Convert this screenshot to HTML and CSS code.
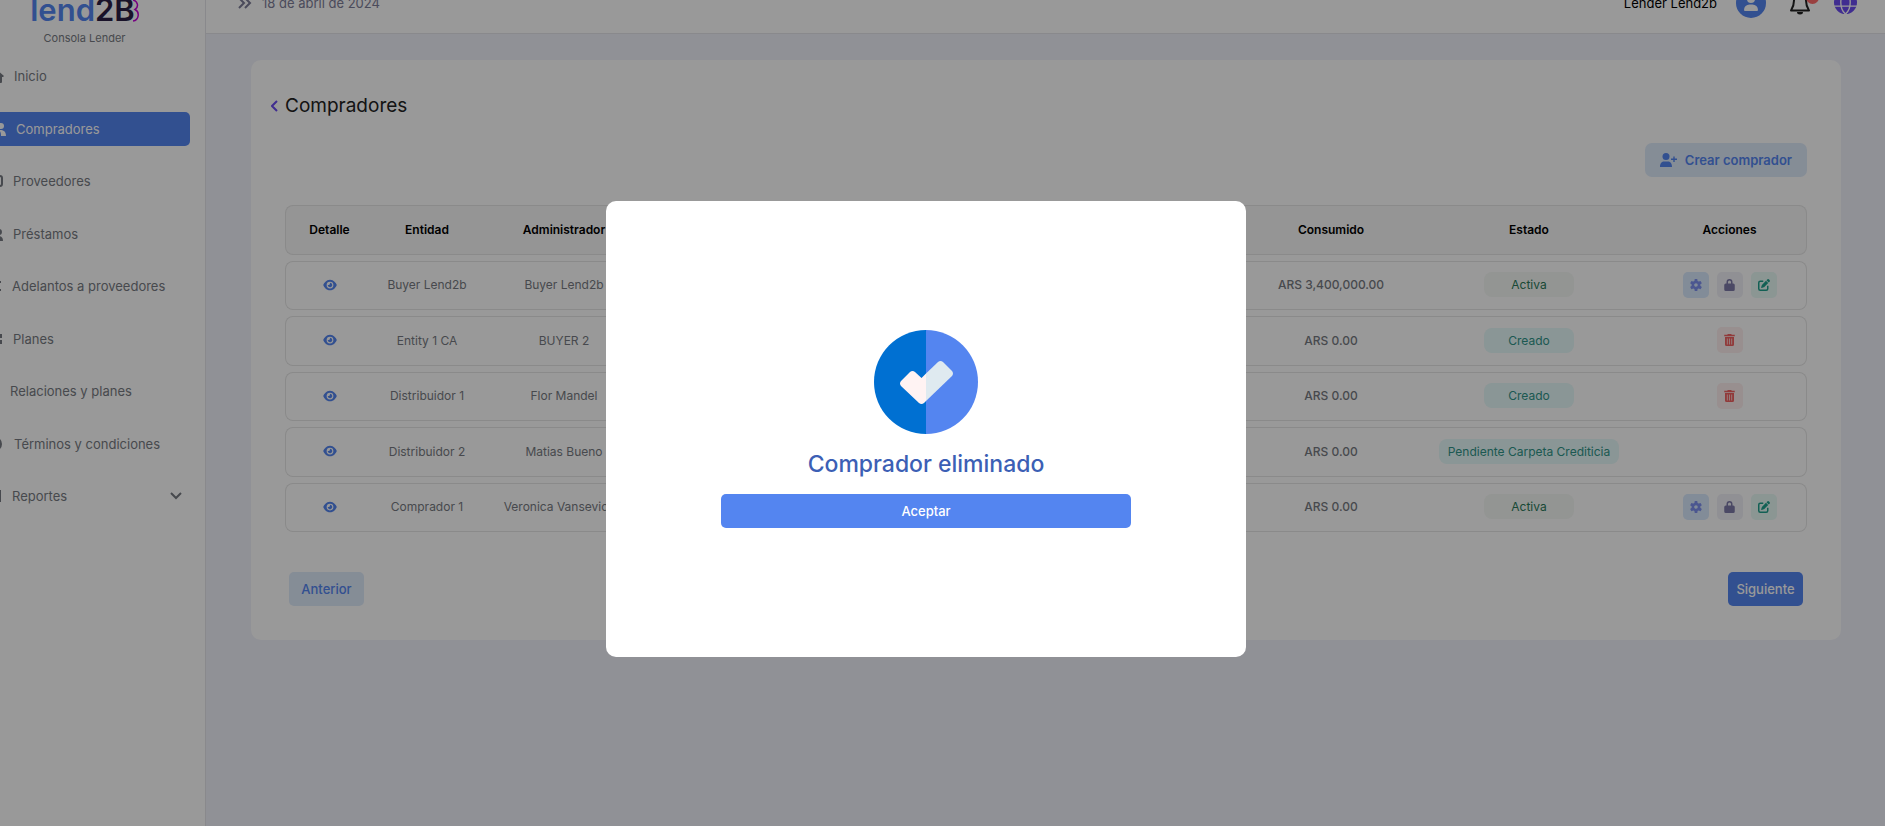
FILE: index.html
```html
<!DOCTYPE html>
<html lang="es">
<head>
    <meta charset="UTF-8">
    <meta name="viewport" content="width=device-width, initial-scale=1.0">
    <title>Compradores</title>
    <link rel="stylesheet" href="styles.css">
</head>
<body>
    <!-- shared icons -->
    <svg class="sprite" aria-hidden="true">
        <symbol id="i-eye" viewBox="0 0 576 512"><path fill-rule="evenodd" d="M288 32c-81 0-146 37-193 80C48 156 17 208 3 244c-4 8-4 17 0 25 14 35 45 87 92 131 47 43 112 80 193 80s146-37 193-80c47-44 78-96 92-131 4-8 4-17 0-25-14-36-45-88-92-132-47-43-112-80-193-80zM144 256a144 144 0 1 1 288 0 144 144 0 1 1-288 0zm144-64c0 35-29 64-64 64-7 0-14-1-20-3-6-2-12 1-12 7 0 7 1 14 3 21 14 51 67 82 118 68s82-67 68-118c-11-41-48-69-89-71-6 0-9 6-7 12 2 6 3 13 3 20z"/></symbol>
        <symbol id="i-gear" viewBox="0 0 16 16"><path fill="none" stroke="currentColor" stroke-width="3.400" d="M8 3.900a4.100 4.100 0 1 0 0 8.200 4.100 4.100 0 0 0 0-8.200z"/><path d="M6.300 0h3.400l.5 3.500H5.800zM6.300 16h3.400l.5-3.500H5.800zM15.800 5.500l-1.700-3-3.300 1.300 2.200 3.800zM.2 10.500l1.700 3 3.300-1.300L3 8.400zM15.800 10.500l-1.700 3-3.300-1.300 2.200-3.800zM.2 5.500l1.700-3 3.300 1.300L3 7.600z"/></symbol>
        <symbol id="i-lock" viewBox="0 0 14 16"><path fill-rule="evenodd" d="M3 6V4a4 4 0 0 1 8 0v2h1a2 2 0 0 1 2 2v6a2 2 0 0 1-2 2H2a2 2 0 0 1-2-2V8a2 2 0 0 1 2-2zm2 0h4V4a2 2 0 0 0-4 0z"/></symbol>
        <symbol id="i-edit" viewBox="0 0 16 16"><path d="M12.300.7a1.700 1.700 0 0 1 2.400 0l.6.6a1.700 1.700 0 0 1 0 2.400l-1 1-3-3zM10.600 2.400l3 3-5.200 5.200c-.2.200-.5.400-.8.500l-2.600.8c-.5.200-1-.300-.8-.8l.8-2.600c.1-.3.300-.6.500-.8zM3 2h4v2H3a1 1 0 0 0-1 1v8a1 1 0 0 0 1 1h8a1 1 0 0 0 1-1V9h2v4a3 3 0 0 1-3 3H3a3 3 0 0 1-3-3V5a3 3 0 0 1 3-3z"/></symbol>
        <symbol id="i-trash" viewBox="0 0 14 16"><path fill-rule="evenodd" d="M4.200.5 4.700 0h4.600l.5.5.2.5h4v2H0V1h4zM1 4h12v10a2 2 0 0 1-2 2H3a2 2 0 0 1-2-2zm2.500 2v8h1V6zm3 0v8h1V6zm3 0v8h1V6z"/></symbol>
        <symbol id="i-user" viewBox="0 0 14 16"><path d="M7 8a4 4 0 1 0 0-8 4 4 0 0 0 0 8zM5.500 9.500h3A5.500 5.500 0 0 1 14 15a1 1 0 0 1-1 1H1a1 1 0 0 1-1-1 5.500 5.500 0 0 1 5.500-5.500z"/></symbol>
    </svg>

    <div class="app">
        <aside class="sidebar">
            <div class="brand">
                <div class="logo">
                    <span class="logo-lend">lend</span><span class="logo-two">2B</span>
                    <svg class="logo-edge" width="6" height="23" viewBox="0 0 6 23"><path d="M0 1c5 1 6 7 2 9.500C7 13 6 21 0 22" fill="none" stroke="#c400d8" stroke-width="1.500"/></svg>
                </div>
                <div class="brand-sub">Consola Lender</div>
            </div>
            <nav class="menu">
                <a href="#"><svg width="16" height="14" viewBox="0 0 16 14"><path d="M8 0l8 7-1 1h-1v5a1 1 0 0 1-1 1h-3V9H6v5H3a1 1 0 0 1-1-1V8H1L0 7z"/></svg>Inicio</a>
                <a href="#" class="active"><svg width="18" height="14" viewBox="0 0 18 14"><circle cx="6" cy="4" r="3"/><circle cx="13" cy="4" r="3"/><path d="M0 14c0-4 2-6 6-6s6 2 6 6zM13 14c0-3-.5-4.500-2-6 4 0 7 1 7 6z"/></svg>Compradores</a>
                <a href="#"><svg width="15" height="12" viewBox="0 0 15 12"><path d="M1 1h11a2 2 0 0 1 2 2v6a2 2 0 0 1-2 2H1" fill="none" stroke="currentColor" stroke-width="2"/><path d="M0 1h12v3H0z"/></svg>Proveedores</a>
                <a href="#"><svg width="15" height="14" viewBox="0 0 15 14"><circle cx="11" cy="5" r="3"/><path d="M0 14c0-4 4-5 10-5 3 0 5 1 5 5z"/></svg>Préstamos</a>
                <a href="#"><svg width="14" height="12" viewBox="0 0 14 12"><path d="M0 1h13v2H0zM0 9h13v2H0z"/></svg>Adelantos a proveedores</a>
                <a href="#"><svg width="15" height="10" viewBox="0 0 15 10"><path d="M0 0h14v4H0zM0 6h14v4H0z"/></svg>Planes</a>
                <a href="#"><svg width="12" height="12" viewBox="0 0 12 12"><path d="M0 0h10v12H0z"/></svg>Relaciones y planes</a>
                <a href="#"><svg width="16" height="14" viewBox="0 0 16 14"><circle cx="7" cy="7" r="7"/></svg>Términos y condiciones</a>
                <a href="#"><svg width="14" height="12" viewBox="0 0 14 12"><path d="M0 0h13v12H0z"/></svg>Reportes<svg class="chevron" width="12" height="8" viewBox="0 0 12 8"><path d="M1 1l5 5 5-5"/></svg></a>
            </nav>
        </aside>

        <div class="main">
            <header class="topbar">
                <svg class="line" width="14" height="12" viewBox="0 0 14 12"><path d="M1 1l5 5-5 5M7 1l5 5-5 5"/></svg>
                <span class="date">18 de abril de 2024</span>
                <span class="user-name">Lender Lend2b</span>
                <a href="#" class="avatar" aria-label="Perfil"><svg width="14" height="16"><use href="#i-user"/></svg></a>
                <a href="#" class="bell" aria-label="Notificaciones">
                    <svg width="20" height="24" viewBox="0 0 20 24"><path d="M1 19.500c2-3 3-5 3-10a6 6 0 0 1 12 0c0 5 1 7 3 10z" fill="none" stroke="#222" stroke-width="2" stroke-linejoin="round"/><path d="M7 21h6a3 2.500 0 0 1-6 0z" fill="#222"/></svg>
                    <span class="dot"></span>
                </a>
                <a href="#" class="globe" aria-label="Idioma"><svg width="23" height="23" viewBox="0 0 22 22"><circle cx="11" cy="11" r="11" fill="#6b4cf0"/><path d="M0 7.500h22M0 14.500h22M11 0c-6 5-6 17 0 22M11 0c6 5 6 17 0 22" fill="none" stroke="#fff" stroke-width="1.300"/></svg></a>
            </header>

            <main class="card">
                <h1><a href="#" aria-label="Volver"><svg class="line back" width="8" height="12" viewBox="0 0 8 12"><path d="M6 1L1 6l5 5"/></svg></a>Compradores</h1>
                <div class="toolbar">
                    <button type="button" class="btn btn-light btn-create">
                        <svg width="17" height="14" viewBox="0 0 17 14"><circle cx="6" cy="3.500" r="3.500"/><path d="M0 14c0-4 2-5.500 4-5.500h4c2 0 4 1.500 4 5.500zM13.300 3.500h1.400v2H17v1.400h-2.300V9h-1.400V6.900H11V5.500h2.300z"/></svg>
                        Crear comprador
                    </button>
                </div>

                <table>
                    <colgroup>
                        <col class="col-detail"><col class="col-entity"><col class="col-admin"><col>
                        <col class="col-used"><col class="col-state"><col class="col-actions">
                    </colgroup>
                    <thead>
                        <tr><th>Detalle</th><th>Entidad</th><th>Administrador</th><th></th><th>Consumido</th><th>Estado</th><th>Acciones</th></tr>
                    </thead>
                    <tbody>
                        <tr>
                            <td><a href="#" class="eye" aria-label="Ver"><svg width="14" height="12"><use href="#i-eye"/></svg></a></td>
                            <td>Buyer Lend2b</td><td>Buyer Lend2b</td><td></td>
                            <td class="amount">ARS 3,400,000.00</td>
                            <td><span class="badge active">Activa</span></td>
                            <td><div class="actions">
                                <button type="button" class="icon-btn config" aria-label="Configurar"><svg width="12" height="12"><use href="#i-gear"/></svg></button>
                                <button type="button" class="icon-btn lock" aria-label="Bloquear"><svg width="11" height="12"><use href="#i-lock"/></svg></button>
                                <button type="button" class="icon-btn edit" aria-label="Editar"><svg width="12" height="12"><use href="#i-edit"/></svg></button>
                            </div></td>
                        </tr>
                        <tr>
                            <td><a href="#" class="eye" aria-label="Ver"><svg width="14" height="12"><use href="#i-eye"/></svg></a></td>
                            <td>Entity 1 CA</td><td>BUYER 2</td><td></td>
                            <td class="amount">ARS 0.00</td>
                            <td><span class="badge">Creado</span></td>
                            <td><div class="actions">
                                <button type="button" class="icon-btn delete" aria-label="Eliminar"><svg width="11" height="12"><use href="#i-trash"/></svg></button>
                            </div></td>
                        </tr>
                        <tr>
                            <td><a href="#" class="eye" aria-label="Ver"><svg width="14" height="12"><use href="#i-eye"/></svg></a></td>
                            <td>Distribuidor 1</td><td>Flor Mandel</td><td></td>
                            <td class="amount">ARS 0.00</td>
                            <td><span class="badge">Creado</span></td>
                            <td><div class="actions">
                                <button type="button" class="icon-btn delete" aria-label="Eliminar"><svg width="11" height="12"><use href="#i-trash"/></svg></button>
                            </div></td>
                        </tr>
                        <tr>
                            <td><a href="#" class="eye" aria-label="Ver"><svg width="14" height="12"><use href="#i-eye"/></svg></a></td>
                            <td>Distribuidor 2</td><td>Matias Bueno</td><td></td>
                            <td class="amount">ARS 0.00</td>
                            <td><span class="badge">Pendiente Carpeta Crediticia</span></td>
                            <td></td>
                        </tr>
                        <tr>
                            <td><a href="#" class="eye" aria-label="Ver"><svg width="14" height="12"><use href="#i-eye"/></svg></a></td>
                            <td>Comprador 1</td><td>Veronica Vansevicius</td><td></td>
                            <td class="amount">ARS 0.00</td>
                            <td><span class="badge active">Activa</span></td>
                            <td><div class="actions">
                                <button type="button" class="icon-btn config" aria-label="Configurar"><svg width="12" height="12"><use href="#i-gear"/></svg></button>
                                <button type="button" class="icon-btn lock" aria-label="Bloquear"><svg width="11" height="12"><use href="#i-lock"/></svg></button>
                                <button type="button" class="icon-btn edit" aria-label="Editar"><svg width="12" height="12"><use href="#i-edit"/></svg></button>
                            </div></td>
                        </tr>
                    </tbody>
                </table>

                <div class="pager">
                    <button type="button" class="btn btn-light">Anterior</button>
                    <button type="button" class="btn btn-primary">Siguiente</button>
                </div>
            </main>
        </div>
    </div>

    <div class="overlay">
        <div class="modal" role="dialog" aria-modal="true" aria-labelledby="modal-title">
            <svg width="104" height="104" viewBox="0 0 104 104">
                <path d="M52 0a52 52 0 0 0 0 104z" fill="#0070d2"/>
                <path d="M52 0a52 52 0 0 1 0 104z" fill="#5485f0"/>
                <path d="M52 43.500L47.500 48 41 42q-2.500-2-5 0L27 51q-2 2.500 0 5l18 17q2.500 2 5 0l2-2z" fill="#fff3f3"/>
                <path d="M52 43.500L64 32q2.500-2 5 0l9 9q2 2.500 0 5L52 71z" fill="#dfeaf0"/>
            </svg>
            <h2 id="modal-title">Comprador eliminado</h2>
            <button type="button" class="btn btn-accept">Aceptar</button>
        </div>
    </div>
</body>
</html>
```
FILE: styles.css
```css
* {
    box-sizing: border-box;
}
body {
    margin: 0;
    overflow: hidden;
    background-color: #f1f2fa;
    font-family: Inter, "Liberation Sans", sans-serif;
    font-size: 13px;
    color: #777b82;
}
a {
    color: inherit;
    text-decoration: none;
}
svg {
    display: block;
    flex: none;
    fill: currentColor;
}
.sprite {
    position: absolute;
    width: 0;
    height: 0;
}
.line,
.chevron {
    fill: none;
    stroke: currentColor;
    stroke-width: 2;
}
.app {
    display: flex;
    min-height: calc(100vh + 28px);
    margin: -28px 0 0 -28px;
}

/* sidebar */
.sidebar {
    flex: none;
    width: 234px;
    background-color: #fff;
    border-right: 1px solid #e4e5ea;
}
.brand {
    display: flex;
    flex-direction: column;
    align-items: center;
    padding: 18px 8px 0 0;
}
.logo {
    display: flex;
    align-items: center;
    font-size: 31px;
    font-weight: 600;
    line-height: 40px;
}
.logo-lend {
    color: #5485f0;
}
.logo-two {
    color: #2a1f45;
}
.logo-edge {
    margin-left: -2px;
}
.brand-sub {
    font-size: 11px;
    line-height: 16px;
}
.menu {
    display: flex;
    flex-direction: column;
    justify-content: space-between;
    height: 454px;
    margin-top: 13px;
    padding: 0 15px 0 8px;
}
.menu a {
    display: flex;
    align-items: center;
    gap: 10px;
    height: 34px;
    padding: 0 8px;
    border-radius: 5px;
}
.menu .active {
    background-color: #5485f0;
    color: #fff;
}
.menu .chevron {
    margin-left: auto;
}

/* top bar */
.main {
    flex: 1;
    min-width: 0;
}
.topbar {
    display: flex;
    align-items: center;
    height: 62px;
    padding: 0 28px 0 32px;
    background-color: #fff;
    border-bottom: 1px solid #e4e5ea;
    color: #7d7d98;
}
.date {
    margin-left: 10px;
}
.user-name {
    margin-left: auto;
    color: #000;
}
.avatar {
    display: flex;
    align-items: center;
    justify-content: center;
    width: 30px;
    height: 30px;
    margin-left: 19px;
    border-radius: 50%;
    background-color: #5485f0;
    color: #fff;
}
.bell {
    position: relative;
    margin: 0 24px;
}
.dot {
    position: absolute;
    top: 0;
    right: -9px;
    width: 13px;
    height: 13px;
    border-radius: 50%;
    background-color: #ff6b6b;
}

/* card */
.card {
    margin: 26px 44px 0 45px;
    padding: 34px;
    border-radius: 10px;
    background-color: #fff;
}
h1 {
    display: flex;
    align-items: center;
    gap: 6px;
    margin: 0 0 0 -14px;
    font-size: 19px;
    font-weight: 400;
    line-height: 24px;
    color: #222;
}
.back {
    color: #6b4cf0;
}
.toolbar {
    display: flex;
    justify-content: flex-end;
    margin: 25px 0 22px;
}
.btn {
    height: 34px;
    padding: 0;
    border: 0;
    border-radius: 5px;
    font-family: inherit;
    font-size: 13px;
    font-weight: 500;
}
.btn-light {
    background-color: #deebfb;
    color: #5485f0;
}
.btn-primary {
    background-color: #5485f0;
    color: #fff;
}
.btn-create {
    display: flex;
    align-items: center;
    gap: 8px;
    padding: 0 15px;
    border-radius: 7px;
    font-weight: 600;
}

/* table */
table {
    width: 100%;
    table-layout: fixed;
    border-collapse: separate;
    border-spacing: 0 6px;
    font-size: 12px;
    text-align: center;
}
.col-detail {
    width: 88px;
}
.col-entity {
    width: 108px;
}
.col-admin {
    width: 166px;
}
.col-used {
    width: 148px;
}
.col-state {
    width: 248px;
}
.col-actions {
    width: 154px;
}
tr {
    height: 50px;
}
tbody tr:nth-child(odd) {
    height: 49px;
}
th,
td {
    padding: 0 0 2px;
    border: 0 solid #e6e6e6;
    border-width: 1px 0;
    white-space: nowrap;
}
th {
    background-color: #f8f8f8;
    font-weight: 600;
    color: #000;
}
th:first-child,
td:first-child {
    border-left-width: 1px;
    border-radius: 8px 0 0 8px;
}
th:last-child,
td:last-child {
    border-right-width: 1px;
    border-radius: 0 8px 8px 0;
}
.eye svg {
    margin: 0 auto;
    color: #5485f0;
}
.amount {
    font-weight: 500;
}
.badge {
    display: inline-block;
    min-width: 90px;
    padding: 0 9px;
    border-radius: 8px;
    background-color: #e6fafa;
    line-height: 25px;
    color: #2f9488;
}
.badge.active {
    background-color: #f5f9f5;
    color: #2c7a5b;
}
.actions {
    display: flex;
    justify-content: center;
    gap: 8px;
}
.icon-btn {
    display: flex;
    align-items: center;
    justify-content: center;
    width: 26px;
    height: 26px;
    padding: 0;
    border: 0;
    border-radius: 5px;
}
.config {
    background-color: #d9e9fd;
    color: #7f92f0;
}
.lock {
    background-color: #f1f1f7;
    color: #7d7aa8;
}
.edit {
    background-color: #e8faf6;
    color: #1fa08c;
}
.delete {
    background-color: #fdeeee;
    color: #f26161;
}
.pager {
    display: flex;
    justify-content: space-between;
    padding: 34px 4px 0;
}
.pager .btn {
    width: 75px;
}

/* modal */
.overlay {
    position: fixed;
    inset: 0;
    display: flex;
    align-items: center;
    justify-content: center;
    padding: 32px 33px 0 0;
    background-color: rgba(0, 0, 0, 0.4);
}
.modal {
    display: flex;
    flex-direction: column;
    align-items: center;
    justify-content: center;
    width: 640px;
    height: 456px;
    border-radius: 10px;
    background-color: #fff;
}
.modal h2 {
    margin: 16px 0;
    font-size: 23px;
    font-weight: 500;
    line-height: 28px;
    color: #3c5fb5;
}
.btn-accept {
    width: 410px;
    background-color: #5485f0;
    color: #fff;
}
```
